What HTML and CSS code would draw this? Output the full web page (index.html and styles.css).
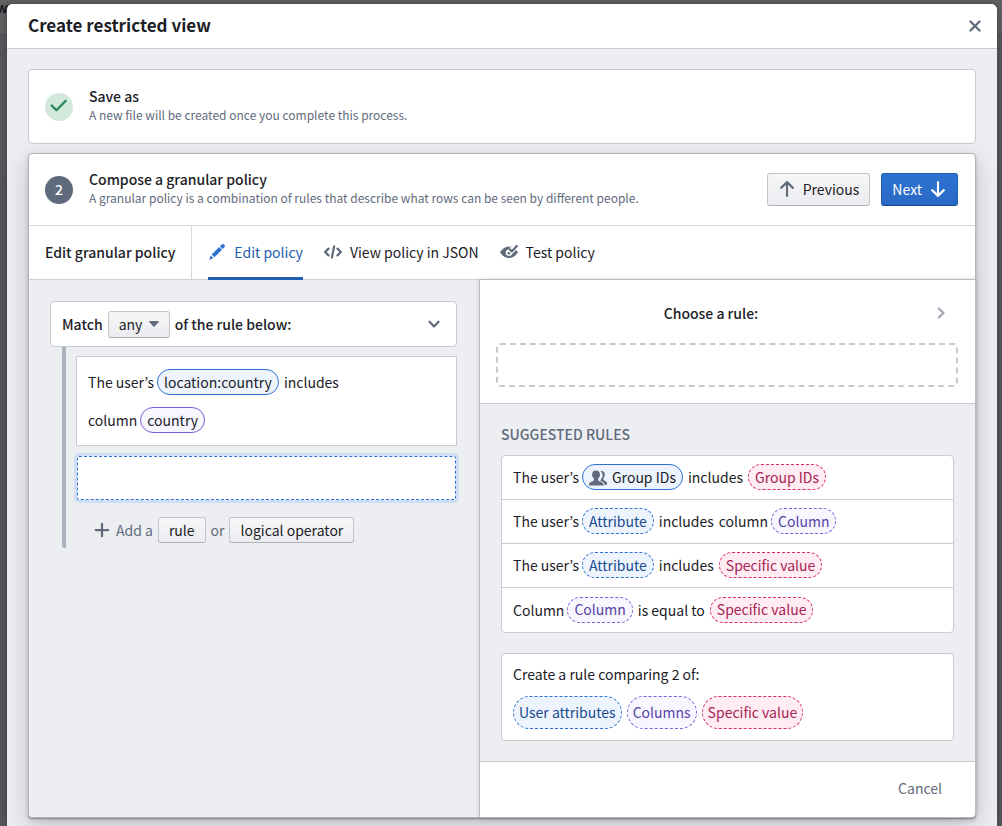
FILE: index.html
```html
<!DOCTYPE html>
<html lang="en">
<head>
<meta charset="utf-8">
<meta name="viewport" content="width=device-width, initial-scale=1">
<title>Create restricted view</title>
<link rel="stylesheet" href="styles.css">
</head>
<body>
<div class="backdrop" aria-hidden="true"><span class="backdrop-title">w</span></div>
<main class="dialog" role="dialog" aria-labelledby="dialog-title">
  <header class="dialog-header">
    <h1 class="dialog-title" id="dialog-title">Create restricted view</h1>
    <button class="icon-button" type="button" aria-label="Close">
      <svg class="icon" viewBox="0 0 16 16"><path d="M9.41 8l3.29-3.29c.19-.18.3-.43.3-.71a1.003 1.003 0 00-1.71-.71L8 6.59l-3.29-3.3a1.003 1.003 0 00-1.42 1.42L6.59 8 3.3 11.29c-.19.18-.3.43-.3.71a1.003 1.003 0 001.71.71L8 9.41l3.29 3.29c.18.19.43.3.71.3a1.003 1.003 0 00.71-1.71L9.41 8z"/></svg>
    </button>
  </header>
  <div class="dialog-body">
    <section class="step">
      <div class="step-header step-header-done">
        <span class="step-badge step-badge-done">
          <svg class="icon" viewBox="0 0 16 16"><path d="M1.500 7.600l4.200 4.200L14 3.400" fill="none" stroke="currentColor" stroke-width="2" stroke-linecap="round" stroke-linejoin="round"/></svg>
        </span>
        <div class="step-text">
          <h2 class="step-title">Save as</h2>
          <p class="step-description">A new file will be created once you complete this process.</p>
        </div>
      </div>
    </section>

    <section class="step step-active">
      <div class="step-header">
        <span class="step-badge">2</span>
        <div class="step-text">
          <h2 class="step-title">Compose a granular policy</h2>
          <p class="step-description">A granular policy is a combination of rules that describe what rows can be seen by different people.</p>
        </div>
        <div class="step-actions">
          <button class="button button-large" type="button">
            <svg class="icon" viewBox="0 0 16 16"><path d="M8 14.200V2M2.800 7L8 1.900 13.200 7" fill="none" stroke="currentColor" stroke-width="1.900" stroke-linecap="round" stroke-linejoin="round"/></svg>
            Previous
          </button>
          <button class="button button-large button-primary" type="button">
            Next
            <svg class="icon" viewBox="0 0 16 16"><path d="M8 1.800V14M2.800 9L8 14.100 13.200 9" fill="none" stroke="currentColor" stroke-width="1.900" stroke-linecap="round" stroke-linejoin="round"/></svg>
          </button>
        </div>
      </div>

      <nav class="tab-bar">
        <h3 class="tab-bar-title">Edit granular policy</h3>
        <div class="tabs" role="tablist">
          <button class="tab tab-selected" type="button" role="tab" aria-selected="true">
            <svg class="icon" viewBox="0 0 16 16"><path d="M3.25 10.26l2.47 2.47 6.69-6.69-2.46-2.48-6.7 6.7zM.99 14.99l3.86-1.39-2.46-2.44L.99 14.99zm12.25-14c-.48 0-.92.2-1.24.51l-1.44 1.44 2.47 2.47 1.44-1.44c.32-.32.51-.75.51-1.24.01-.95-.77-1.74-1.74-1.74z"/></svg>
            Edit policy
          </button>
          <button class="tab" type="button" role="tab" aria-selected="false">
            <svg class="icon" viewBox="0 0 16 16"><path d="M15.71 7.29l-3-3a1.003 1.003 0 00-1.42 1.42L13.59 8l-2.3 2.29a1.003 1.003 0 001.42 1.42l3-3c.18-.18.29-.43.29-.71s-.11-.53-.29-.71zM5 5a1.003 1.003 0 00-1.71-.71l-3 3C.11 7.47 0 7.72 0 8s.11.53.29.71l3 3a1.003 1.003 0 001.42-1.42L2.41 8l2.3-2.29C4.89 5.53 5 5.28 5 5zm4-3c-.48 0-.87.35-.96.81l-2 10c-.02.06-.04.12-.04.19 0 .55.45 1 1 1 .48 0 .87-.35.96-.81l2-10c.02-.06.04-.12.04-.19 0-.55-.45-1-1-1z"/></svg>
            View policy in JSON
          </button>
          <button class="tab" type="button" role="tab" aria-selected="false">
            <svg class="icon" viewBox="0 0 16 16"><path d="M0 8.200C2 5 4.800 3 8 3s6 2 8 5.200c-2 3.200-4.800 5.200-8 5.200s-6-2-8-5.200z"/><circle cx="8" cy="8.600" r="2.900" fill="#fff"/><circle cx="8" cy="9" r="1.300"/><path d="M8 5l2.400 2.200 4.800-5" fill="none" stroke="#fff" stroke-width="4.400" stroke-linejoin="round"/><path d="M8.600 5.600l2 1.800 4.300-4.700" fill="none" stroke="currentColor" stroke-width="2" stroke-linecap="round" stroke-linejoin="round"/></svg>
            Test policy
          </button>
        </div>
      </nav>

      <div class="editor">
        <div class="policy">
          <div class="match">
            <label class="match-label" for="match-mode">Match</label>
            <span class="select">
              <select class="select-input" id="match-mode"><option>any</option><option>all</option></select>
              <svg class="select-caret" viewBox="0 0 10 6"><path d="M.8 0h8.400c.6 0 .9.600.5 1L5.600 5.600a.8.8 0 01-1.200 0L.3 1C-.1.600.2 0 .8 0z"/></svg>
            </span>
            <span class="match-text">of the rule below:</span>
            <button class="icon-button" type="button" aria-label="Collapse">
              <svg class="icon" viewBox="0 0 16 16"><path d="M4 6l4 4.200L12 6" fill="none" stroke="currentColor" stroke-width="2" stroke-linecap="round" stroke-linejoin="round"/></svg>
            </button>
          </div>
          <div class="branch">
            <div class="rule">
              <div class="rule-line">The user’s <span class="chip chip-blue chip-solid">location:country</span> <span class="operator">includes</span></div>
              <div class="rule-line">column <span class="chip chip-violet chip-solid">country</span></div>
            </div>
            <div class="rule-slot"></div>
            <div class="add-row">
              <svg class="icon" viewBox="0 0 16 16"><path d="M8 2.500v11M2.500 8h11" fill="none" stroke="currentColor" stroke-width="2" stroke-linecap="round"/></svg>
              <span>Add a</span>
              <button class="button" type="button">rule</button>
              <span>or</span>
              <button class="button" type="button">logical operator</button>
            </div>
          </div>
        </div>

        <aside class="chooser">
          <div class="chooser-header">
            <div class="chooser-heading">
              <h3 class="chooser-title">Choose a rule:</h3>
              <button class="icon-button icon-button-muted" type="button" aria-label="Next rule">
                <svg class="icon" viewBox="0 0 16 16"><path d="M6 4l4.200 4L6 12" fill="none" stroke="currentColor" stroke-width="2" stroke-linecap="round" stroke-linejoin="round"/></svg>
              </button>
            </div>
            <div class="drop-zone"></div>
          </div>
          <div class="suggestions">
            <h4 class="suggestions-title">SUGGESTED RULES</h4>
            <ul class="suggestion-list">
              <li class="suggestion">The user’s <span class="chip chip-blue chip-solid"><svg class="icon" viewBox="0 0 16 16"><path d="M10.300 2.300c.5-.4 1.100-.5 1.600-.4 1.500.2 2.100 1.300 2 2.900 0 .5.300.600.1 1.300-.1.400-.4.500-.5.900-.2.700-.5 1-.7 1.300v1.200c.5.900 3.100 1.200 3.200 2.900V14h-2.200c0-2.500-2.300-2.400-3.600-3.500v-.6c.5-.5.800-1.100 1-1.800.4-.2.800-.8.900-1.500.1-.5 0-.9-.2-1.200.1-1.200-.3-2.300-1.600-3.100z"/><path d="M5.900 1.300c2.400-.1 3.900 1 3.700 3.200 0 .7.400.8.200 1.500-.1.600-.5.700-.7 1.200-.2.700-.5 1.100-.9 1.500v1.400c.8 1.500 4.600 1.300 4.900 3.900V14.600H0V13.800c.3-2.400 3.500-2.200 4.400-3.700V8.700c-.4-.4-.8-.8-.9-1.500-.3-.5-.7-.7-.8-1.200-.1-.7.200-.8.200-1.500-.1-1.800 1-3.100 3-3.200z"/></svg>Group IDs</span> <span class="operator">includes</span> <span class="chip chip-pink">Group IDs</span></li>
              <li class="suggestion">The user’s <span class="chip chip-blue">Attribute</span> <span class="operator">includes</span> column <span class="chip chip-violet">Column</span></li>
              <li class="suggestion">The user’s <span class="chip chip-blue">Attribute</span> <span class="operator">includes</span> <span class="chip chip-pink">Specific value</span></li>
              <li class="suggestion">Column <span class="chip chip-violet">Column</span> <span class="operator">is equal to</span> <span class="chip chip-pink">Specific value</span></li>
            </ul>
            <div class="compare">
              <p class="compare-title">Create a rule comparing 2 of:</p>
              <div class="compare-options">
                <button class="chip chip-tall chip-blue" type="button">User attributes</button>
                <button class="chip chip-tall chip-violet" type="button">Columns</button>
                <button class="chip chip-tall chip-pink" type="button">Specific value</button>
              </div>
            </div>
          </div>
          <footer class="chooser-footer">
            <button class="text-button" type="button">Cancel</button>
          </footer>
        </aside>
      </div>
    </section>
  </div>
</main>
</body>
</html>
```
FILE: styles.css
```css
* { box-sizing: border-box; }

body {
  margin: 0;
  padding: 4px 5px 0 7px;
  background: #58595c;
  color: #1c2127;
  font: 14px/20px "Noto Sans CJK KR", "Noto Sans", sans-serif;
}

h1, h2, h3, h4, p, ul { margin: 0; padding: 0; }
ul { list-style: none; }

button, select {
  margin: 0;
  padding: 0;
  border: 0;
  background: none;
  color: inherit;
  font: inherit;
  cursor: pointer;
}

.icon {
  flex: none;
  width: 18px;
  height: 18px;
  fill: currentColor;
}

.backdrop {
  position: absolute;
  inset: 0 0 auto 0;
  height: 35px;
  overflow: hidden;
  border-bottom: 1px solid #4b4c4f;
  background: #616264;
}

.backdrop-title {
  display: block;
  margin: -3px 0 0 -4px;
  color: #1c1e21;
  font-weight: 700;
}

.dialog {
  position: relative;
  display: flex;
  flex-direction: column;
  min-height: calc(100vh - 4px);
  border-radius: 6px 6px 0 0;
  background: #edeef2;
  box-shadow: 0 0 8px rgba(17, 20, 24, 0.4);
}

.dialog-header {
  display: flex;
  align-items: center;
  justify-content: space-between;
  min-height: 45px;
  padding: 0 13px 0 21px;
  border-bottom: 1px solid #c9cbd0;
  border-radius: 6px 6px 0 0;
  background: #fff;
}

.dialog-title {
  padding-bottom: 3px;
  font-size: 17px;
  line-height: 24px;
  font-weight: 700;
}

.icon-button {
  display: flex;
  color: #5f6b7c;
}

.icon-button-muted { color: #a1a7b2; }

.dialog-body {
  display: flex;
  flex: 1;
  flex-direction: column;
  gap: 9px;
  padding: 20px 21px 8px;
}

.step {
  border: 1px solid #cbccd1;
  border-radius: 4px;
  background: #fff;
}

.step-active {
  display: flex;
  flex: 1;
  flex-direction: column;
  border-color: #b4b6bb;
  box-shadow: 0 1px 1px rgba(17, 20, 24, 0.3), 0 2px 4px rgba(17, 20, 24, 0.15), 0 8px 24px rgba(17, 20, 24, 0.2);
}

.step-header {
  display: flex;
  align-items: center;
  gap: 16px;
  min-height: 72px;
  padding: 0 17px 0 16px;
  border-bottom: 1px solid #d8d9dd;
}

.step-header-done {
  min-height: 73px;
  border-bottom: 0;
}

.step-badge {
  display: flex;
  flex: none;
  align-items: center;
  justify-content: center;
  width: 28px;
  height: 28px;
  padding-bottom: 1px;
  border-radius: 50%;
  background: #5f6b7c;
  color: #fff;
  font-weight: 500;
}

.step-badge-done {
  background: #d2e8dc;
  color: #238551;
}

.step-text {
  flex: 1;
  padding-bottom: 3px;
}

.step-title {
  font-size: 14px;
  line-height: 20px;
  font-weight: 500;
}

.step-description {
  color: #5f6b7c;
  font-size: 12px;
  line-height: 18px;
}

.step-actions {
  display: flex;
  gap: 11px;
}

.button {
  display: inline-flex;
  align-items: center;
  justify-content: center;
  gap: 7px;
  min-height: 26px;
  padding: 0 10px 1px;
  border: 1px solid #c3c5c9;
  border-bottom-color: #adb0b5;
  border-radius: 3px;
  background: linear-gradient(#f7f7f9, #ebecef);
  color: #1c2127;
}

.button-large { min-height: 33px; }

.button-large .icon { color: #5f6b7c; }

.button-primary {
  border-color: #215db0 #215db0 #184a90;
  background: linear-gradient(#2e72d2, #2969c5);
  color: #fff;
}

.button-primary .icon { color: #fff; }

.tab-bar {
  display: flex;
  min-height: 54px;
  border-bottom: 1px solid #cfd1d6;
}

.tab-bar-title {
  display: flex;
  align-items: center;
  padding: 0 16px 2px;
  border-right: 1px solid #d8d9dd;
  font-size: 14px;
  font-weight: 500;
}

.tabs {
  display: flex;
  gap: 21px;
  margin-bottom: -1px;
  padding-left: 16px;
}

.tab {
  display: flex;
  align-items: center;
  gap: 8px;
  padding-bottom: 2px;
  border-top: 2px solid transparent;
  border-bottom: 3px solid transparent;
}

.tab .icon { color: #5f6b7c; }

.tab-selected {
  border-bottom-color: #215db0;
  color: #215db0;
}

.tab-selected .icon { color: #2d72d2; }

.editor {
  display: grid;
  flex: 1;
  grid-template-columns: 451fr 495fr;
}

.policy {
  padding: 21px 23px 21px 21px;
  border-radius: 0 0 0 4px;
  background: #edeef2;
}

.match {
  display: flex;
  align-items: center;
  gap: 5px;
  min-height: 46px;
  padding: 0 13px 0 11px;
  border: 1px solid #cbccd1;
  border-radius: 4px;
  background: #fff;
  font-weight: 500;
}

.match-label,
.match-text { padding-bottom: 1px; }

.match .icon-button { margin-left: auto; }

.select {
  position: relative;
  display: inline-flex;
}

.select-input {
  width: 62px;
  height: 27px;
  padding-left: 10px;
  border: 1px solid #c3c5c9;
  border-bottom-color: #adb0b5;
  border-radius: 3px;
  background: linear-gradient(#f7f7f9, #ebecef);
  font-weight: 400;
  appearance: none;
}

.select-caret {
  position: absolute;
  top: 10px;
  right: 11px;
  width: 10px;
  height: 6px;
  fill: #5f6b7c;
  pointer-events: none;
}

.branch {
  display: flex;
  flex-direction: column;
  gap: 9px;
  margin-left: 12px;
  padding: 9px 0 5px 10px;
  border-left: 4px solid #abb3bf;
  border-radius: 0 0 0 2px;
}

.rule {
  display: grid;
  gap: 2px;
  padding: 7px 11px;
  border: 1px solid #cbccd1;
  background: #fff;
}

.rule-line,
.suggestion {
  display: flex;
  align-items: center;
  gap: 3px;
}

.rule-line { min-height: 36px; }

.rule-slot {
  min-height: 44px;
  margin: 1px;
  border: 1px dashed #2d72d2;
  border-radius: 2px;
  background: #fff;
  box-shadow: 0 0 0 3px #cfdef4;
}

.add-row {
  display: flex;
  align-items: center;
  gap: 5px;
  min-height: 26px;
  margin-top: 7px;
  padding-left: 17px;
  color: #5f6b7c;
}

.add-row span { padding-bottom: 1px; }

.chip {
  display: inline-flex;
  align-items: center;
  gap: 5px;
  min-height: 26px;
  padding: 1px 6px 2px;
  border: 1px dashed;
  border-radius: 17px;
  line-height: 20px;
}

.chip .icon {
  align-self: flex-end;
  color: #5f6b7c;
}

.chip-blue {
  border-color: #2d72d2;
  background: #edf4fe;
  color: #184a90;
}

.chip-violet {
  border-color: #7961db;
  background: #f8f6ff;
  color: #5642a6;
}

.chip-pink {
  border-color: #db2c6f;
  background: #ffedf3;
  color: #a82255;
}

.chip-solid {
  border-style: solid;
  color: #1c2127;
}

.chip-tall {
  min-height: 33px;
  padding: 0 5px 1px;
}

.operator { margin: 0 2px; }

.chooser {
  position: relative;
  display: flex;
  flex-direction: column;
  border-radius: 0 0 4px 0;
  background: #edeef2;
  box-shadow: 0 0 0 1px #b9bbc0, 0 0 6px rgba(17, 20, 24, 0.16);
}

.chooser-header {
  padding: 23px 17px 16px 16px;
  border-bottom: 1px solid #c9cbd0;
  background: #fff;
}

.chooser-heading {
  display: flex;
  align-items: center;
  padding-right: 8px;
}

.chooser-title {
  flex: 1;
  padding-right: 6px;
  font-size: 14px;
  font-weight: 500;
  text-align: center;
}

.drop-zone {
  min-height: 44px;
  margin-top: 20px;
  border: 2px dashed #c5cbd3;
  border-radius: 4px;
}

.suggestions {
  flex: 1;
  padding: 20px 21px;
}

.suggestions-title {
  color: #5f6b7c;
  font-size: 14px;
  font-weight: 500;
}

.suggestion-list,
.compare {
  border: 1px solid #cbccd1;
  border-radius: 4px;
  background: #fff;
}

.suggestion-list { margin-top: 11px; }

.suggestion {
  min-height: 44px;
  padding: 0 11px 1px;
  border-bottom: 1px solid #cbccd1;
}

.suggestion:last-child { border-bottom: 0; }

.compare {
  margin-top: 20px;
  padding: 10px 11px 11px;
}

.compare-options {
  display: flex;
  gap: 5px;
  margin-top: 12px;
}

.chooser-footer {
  display: flex;
  align-items: center;
  justify-content: flex-end;
  min-height: 56px;
  padding: 0 33px 3px;
  border-top: 1px solid #c9cbd0;
  border-radius: 0 0 4px 0;
  background: #fff;
}

.text-button { color: #5f6b7c; }
```
